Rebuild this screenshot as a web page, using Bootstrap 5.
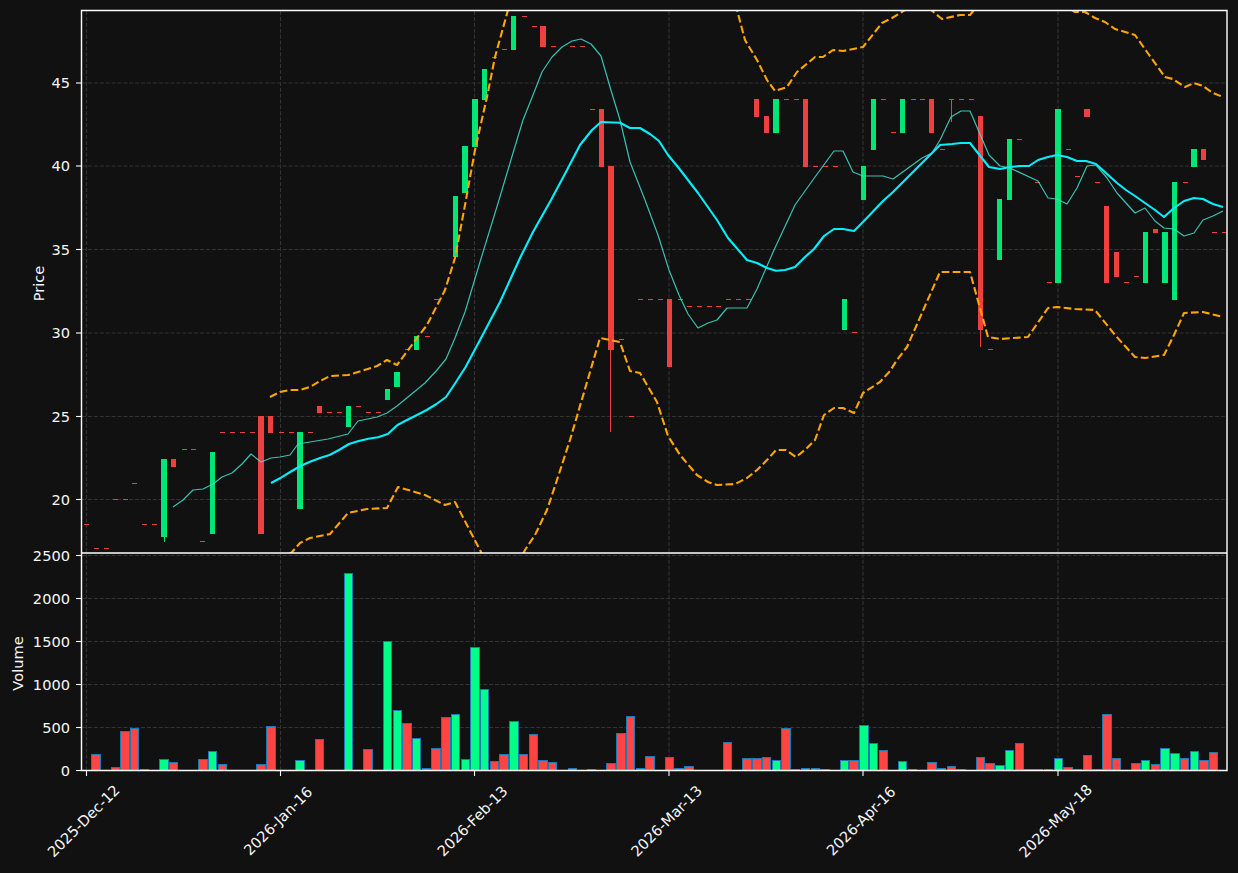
<!DOCTYPE html>
<html lang="en">
  <head>
    <meta charset="UTF-8" />
    <meta name="viewport" content="width=device-width, initial-scale=1.0" />
    <title>Price and volume chart</title>
    <link href="https://cdn.jsdelivr.net/npm/bootstrap@5.3.0/dist/css/bootstrap.min.css" rel="stylesheet" />
    <style>
      html, body { background-color: #111111; overflow: hidden; }
      .chart { width: 1238px; height: 873px; }
      .chart text { font-family: "DejaVu Sans", sans-serif; font-size: 14.6px; fill: #f6f6f6; }
      .grid { stroke: #333333; stroke-width: 1.1; stroke-dasharray: 4.1 1.8; fill: none; }
      .spine { stroke: #ffffff; stroke-width: 1.4; fill: none; }
      .tick { stroke: #ffffff; stroke-width: 1.1; }
      .up { fill: #00e676; }
      .down { fill: #ef4040; }
      .vol { stroke: #1f77b4; stroke-width: 1; }
      .vol-up { fill: #00ff88; }
      .vol-down { fill: #ff4444; }
      .ma-slow { stroke: #00f0ff; stroke-width: 2.1; fill: none; stroke-linejoin: round; }
      .ma-fast { stroke: #40e0d0; stroke-width: 1.2; stroke-opacity: .85; fill: none; stroke-linejoin: round; }
      .band { stroke: #ffa500; stroke-width: 2.1; stroke-dasharray: 7.7 3.3; fill: none; stroke-linejoin: round; }
    </style>
  </head>
  <body class="m-0 p-0">
    <div class="container-fluid p-0">
      <svg class="chart d-block" id="chart" viewBox="0 0 1238 873" xmlns="http://www.w3.org/2000/svg">
        <defs>
          <clipPath id="clipMain"><rect x="82" y="11" width="1145" height="542" /></clipPath>
        </defs>
        <g id="grid"></g>
        <g id="volume" shape-rendering="crispEdges"></g>
        <g id="candles" clip-path="url(#clipMain)" shape-rendering="crispEdges"></g>
        <g id="lines" clip-path="url(#clipMain)"></g>
        <g id="ticks"></g>
        <path class="spine" d="M81.5 10.5H1227V770.5H81.5Z M81.5 553H1227" />

        <g text-anchor="end">
          <text x="70" y="88.3">45</text>
          <text x="70" y="171.3">40</text>
          <text x="70" y="254.8">35</text>
          <text x="70" y="338.3">30</text>
          <text x="70" y="421.8">25</text>
          <text x="70" y="504.8">20</text>
          <text x="70" y="560.8">2500</text>
          <text x="70" y="603.8">2000</text>
          <text x="70" y="646.8">1500</text>
          <text x="70" y="689.8">1000</text>
          <text x="70" y="732.8">500</text>
          <text x="70" y="775.8">0</text>
        </g>
        <text text-anchor="middle" transform="translate(43.5 283.5) rotate(-90)">Price</text>
        <text text-anchor="middle" transform="translate(22.5 663.5) rotate(-90)">Volume</text>
        <g text-anchor="middle">
          <text transform="translate(83.5 821) rotate(-45)" dy=".35em">2025-Dec-12</text>
          <text transform="translate(278 821) rotate(-45)" dy=".35em">2026-Jan-16</text>
          <text transform="translate(472.5 821) rotate(-45)" dy=".35em">2026-Feb-13</text>
          <text transform="translate(666.5 821) rotate(-45)" dy=".35em">2026-Mar-13</text>
          <text transform="translate(861 821) rotate(-45)" dy=".35em">2026-Apr-16</text>
          <text transform="translate(1055.5 821) rotate(-45)" dy=".35em">2026-May-18</text>
        </g>
      </svg>
    </div>

    <script src="https://cdn.jsdelivr.net/npm/bootstrap@5.3.0/dist/js/bootstrap.bundle.min.js"></script>
    <script>
      const NS = "http://www.w3.org/2000/svg";
      function add(parent, tag, attrs) {
        const el = document.createElementNS(NS, tag);
        for (const k in attrs) el.setAttribute(k, attrs[k]);
        document.getElementById(parent).appendChild(el);
      }

      // grid and ticks
      const dateX = [86.5, 280.5, 474.5, 669, 863, 1058];
      const priceY = [83, 166, 249.5, 333, 416.5, 499.5];
      const volY = [555.5, 598.5, 641.5, 684.5, 727.5, 770.5];
      dateX.forEach((x) => {
        add("grid", "line", { class: "grid", x1: x, x2: x, y1: 11, y2: 770 });
        add("ticks", "line", { class: "tick", x1: x, x2: x, y1: 770.5, y2: 776 });
      });
      priceY.concat(volY.slice(0, 5)).forEach((y) => {
        add("grid", "line", { class: "grid", x1: 82, x2: 1227, y1: y, y2: y });
      });
      priceY.concat(volY).forEach((y) => {
        add("ticks", "line", { class: "tick", x1: 76, x2: 81.5, y1: y, y2: y });
      });

      // candle bodies: left, right, top, bottom, up?
      const bodies = [
        [161,167,459,537,1],[171,176,459,467,0],[210,215,452,534,1],[258,264,416,534,0],
        [268,273,416,433,0],[297,303,432,509,1],[317,322,406,413,0],[346,351,406,427,1],
        [385,390,389,400,1],[394,400,372,387,1],[414,419,336,350,1],[453,458,196,257,1],
        [462,468,146,193,1],[472,478,99,147,1],[482,487,69,100,1],[511,516,16,50,1],
        [540,546,26,47,0],[599,604,109,167,0],[608,614,166,350,0],[667,672,299,367,0],
        [754,759,99,117,0],[764,769,116,133,0],[773,779,99,133,1],[803,808,99,167,0],
        [842,847,299,330,1],[861,866,166,200,1],[871,876,99,150,1],[900,905,99,133,1],
        [929,934,99,133,0],[978,983,116,330,0],[997,1002,199,260,1],[1007,1012,139,200,1],
        [1055,1061,109,283,1],[1084,1090,109,117,0],[1104,1109,206,283,0],[1114,1119,252,277,0],
        [1143,1148,232,283,1],[1153,1158,229,233,0],[1162,1168,232,283,1],[1172,1177,182,300,1],
        [1191,1197,149,167,1],[1201,1206,149,160,0],
      ];
      bodies.forEach((b) => {
        add("candles", "rect", { class: b[4] ? "up" : "down", x: b[0], y: b[2], width: b[1] - b[0], height: b[3] - b[2] });
      });
      // wicks: x, top, bottom, up?
      [[164,537,542,1],[610,350,432,0],[951,99,122,0],[980,330,347,0]].forEach((w) => {
        add("candles", "rect", { class: w[3] ? "up" : "down", x: w[0], y: w[1], width: 1, height: w[2] - w[1] });
      });
      // flat sessions
      const flats = [
        [86,524],[96,548],[106,548],[115,499],[125,499],[134,483],[144,524],[154,524],[184,449],[193,449],
        [202,541],[222,432],[232,432],[242,432],[252,432],[281,432],[291,432],[310,432],[329,412],[339,412],
        [358,406],[368,412],[378,412],[407,349],[427,336],[436,299],[494,57],[504,49],[524,16],[534,26],
        [553,46],[572,46],[582,46],[592,109],[621,339],[631,416],[640,299],[650,299],[660,299],[680,299],
        [689,306],[699,306],[709,306],[718,306],[728,299],[738,299],[748,299],[786,99],[796,99],[815,166],
        [825,166],[835,166],[854,332],[883,99],[893,132],[913,99],[922,99],[942,149],[951,99],[961,99],
        [971,99],[990,349],[1019,139],[1037,182],[1049,282],[1068,149],[1077,176],[1097,182],[1126,282],[1136,276],
        [1185,182],[1214,232],[1224,232],
      ];
      flats.forEach((f) => {
        add("candles", "rect", { class: "down", x: f[0] - 2.5, y: f[1], width: 5, height: 1 });
      });

      // volume: bar index -> top pixel
      const volTop = {
        1:753.5,3:766.5,4:731,5:728,6:769,8:759,9:762,12:759,13:751,14:764,18:764,19:726,22:760,24:739,27:573,
        29:749,31:641,32:710,33:723,34:738,35:768,36:748,37:717,38:714,39:759,40:647,41:689,42:761,43:754,44:721,
        45:754,46:734,47:760,48:762,50:768,52:769,54:763,55:733,56:716,57:768,58:756,60:757,61:768,62:766,66:742,
        68:758,69:758,70:757,71:760,72:728,73:769,74:768,75:768,76:769,78:760,79:760,80:725,81:743,82:750,84:761,
        85:769,87:762,88:768,89:766,90:769,92:757,93:763,94:765,95:750,96:743,97:769,98:769,99:769,100:758,101:767,
        102:769,103:755,104:769,105:714,106:758,108:763,109:760,110:764,111:748,112:753,113:758,114:751,115:760,116:752,
      };
      const volUp = [8,13,22,27,31,32,34,38,39,40,41,44,71,78,80,81,84,85,94,95,100,109,111,112,114];
      Object.keys(volTop).forEach((k) => {
        const i = Number(k);
        const cx = 86.5 + 9.72 * i - 0.3;
        const left = Math.round(cx - 4.7) + 0.5;
        const right = Math.round(cx + 4.7) - 0.5;
        const top = Math.round(volTop[k]) + 0.5;
        add("volume", "rect", {
          class: "vol " + (volUp.includes(i) ? "vol-up" : "vol-down"),
          x: left, y: top, width: right - left, height: Math.max(770 - top, 0.5),
        });
      });

      // overlays as x,y pixel pairs
      const maFast = "173,507 183,500 193,490 203,489 213,484 222,477 232,473 242,464 251,454 261,462 271,458 280,457 290,455 298,444 310,442 328,439 348,434 358,421 377,417 387,413 397,406 425,383 437,370 446,359 455,338 465,312 480,262 499,200 513,153 523,120 533,95 542,72 552,57 562,47 572,41 581,39 591,44 601,56 610,87 620,120 630,162 645,200 658,235 669,270 679,295 688,314 698,328 708,323 717,320 727,308 747,308 757,289 774,250 795,205 815,177 834,151 843,151 853,172 863,176 883,176 893,179 922,158 932,153 940,140 951,117 961,111 970,111 989,155 1000,166 1010,168 1038,181 1048,198 1057,199 1067,204 1077,188 1087,166 1096,165 1107,178 1117,193 1126,203 1135,213 1145,208 1155,221 1164,228 1174,229 1184,236 1194,233 1203,220 1213,216 1223,211";
      const maSlow = "271,483 281,477.7 291,471.5 300.4,466 310,461.7 320,458 329.5,455 339,450 349,444 358.7,441 368.4,438.7 378,437.3 387.8,434 397.5,425 407,420 417,415 426.7,410 436.5,404 446,397 456,382 465.6,367 480,340 500,302 520,258 533,232 551,200 567,170 580,145 592,130 601,122 620,122.7 630,128 640,128 650,134 659,141 668,155 678,167 688,180 698,193 717,220 728,238 747,260 757,263 767,268 776,270.7 785,270 795,267 805,257 814,249 824,236 834,229 843,229 854,231 863,222 883,201 893,192 940,145 952,144 961,143 970,143 989,167 1000,169 1010,167 1020,166 1029,166 1038,160 1048,157 1057,155 1067,157 1077,161 1086,161 1096,164 1117,183 1126,190 1135,196 1145,203 1155,210 1164,217 1174,208 1184,201 1194,198 1203,199 1213,204 1223,207";
      const bandUpper = "270,397 280,392 290,390 300,390 310,387 320,381 330,376 348,375 358,372 377,366 387,360 397,365 417,338 427,325 445,290 455,258 465,205 475,150 487,97 495,57 508,10 520,-30 720,-30 737,10 745,40 757,60 767,80 775,91 787,87 797,72 815,57 823,57 833,50 843,51 863,47 882,23 892,18 905,10 915,3 925,3 931,10 942,19 960,15 970,15 974,10 985,3 1060,3 1075,12 1085,12 1095,18 1105,22 1115,29 1135,35 1147,52 1165,77 1173,79 1185,87 1194,83 1203,86 1213,93 1223,97";
      const bandLower = "270,565 280,560 292,552 300,543 310,538 330,534 348,513 367,509 387,508 398,487 425,495 445,505 455,502 480,550 490,570 515,570 525,550 535,535 547,510 557,480 570,440 600,338 620,342 630,371 640,373 657,402 668,436 680,455 697,475 708,482 717,485 735,484 747,478 757,470 767,460 776,450 786,450 796,457 806,449 815,440 824,415 834,408 843,408 854,413 863,393 880,382 890,371 897,360 907,347 940,272 970,272 988,337 1000,339 1028,337 1048,308 1057,307 1075,309 1095,310 1115,335 1135,357 1145,358 1164,355 1174,335 1184,313 1203,312 1223,317";
      add("lines", "polyline", { class: "band", points: bandUpper });
      add("lines", "polyline", { class: "band", points: bandLower });
      add("lines", "polyline", { class: "ma-fast", points: maFast });
      add("lines", "polyline", { class: "ma-slow", points: maSlow });
    </script>
  </body>
</html>
